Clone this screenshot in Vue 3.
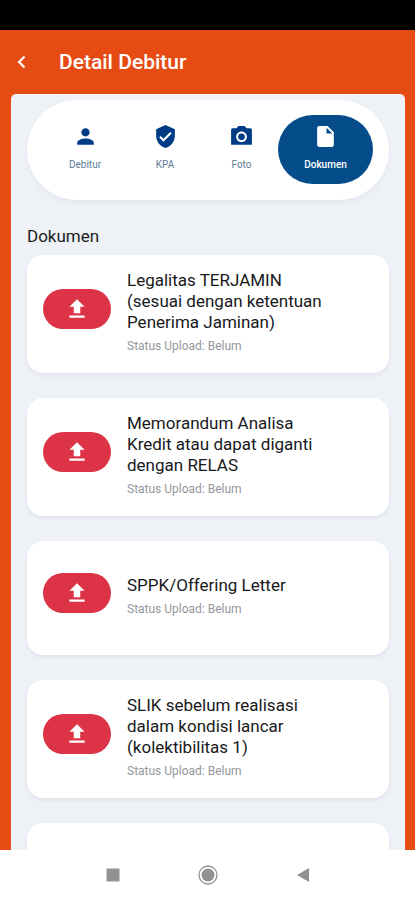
<script setup>
import { ref } from 'vue'

const active = ref('Dokumen')

const tabs = [
  {
    name: 'Debitur',
    icon: 'M12 12c2.21 0 4-1.79 4-4s-1.79-4-4-4-4 1.79-4 4 1.79 4 4 4zm0 2c-2.67 0-8 1.34-8 4v2h16v-2c0-2.66-5.33-4-8-4z',
  },
  {
    name: 'KPA',
    icon: 'M12 1 3 5v6c0 5.55 3.84 10.74 9 12 5.16-1.26 9-6.45 9-12V5l-9-4zm-2 16-4-4 1.41-1.41L10 14.17l6.59-6.59L18 9l-8 8z',
  },
  {
    name: 'Foto',
    icon: 'M9 2 7.17 4H3.500C2.700 4 2 4.700 2 5.500V20h20V5.500C22 4.700 21.300 4 20.500 4h-3.670L15 2H9zm3 15.500c-2.900 0-5.200-2.300-5.200-5.200S9.100 7.100 12 7.100s5.200 2.300 5.200 5.200-2.300 5.200-5.200 5.200zM12 9.100a3.200 3.200 0 1 0 0 6.400 3.200 3.200 0 1 0 0-6.400z',
  },
  {
    name: 'Dokumen',
    icon: 'M6 2c-1.1 0-2 .9-2 2v16c0 1.1.9 2 2 2h12c1.1 0 2-.9 2-2V8l-6-6H6zm7 7V3.5L18.500 9H13z',
  },
]

const documents = [
  'Legalitas TERJAMIN (sesuai dengan ketentuan Penerima Jaminan)',
  'Memorandum Analisa Kredit atau dapat diganti dengan RELAS',
  'SPPK/Offering Letter',
  'SLIK sebelum realisasi dalam kondisi lancar (kolektibilitas 1)',
  'Salinan Permohonan Kredit Debitur',
]
</script>

<template>
  <div class="screen">
    <div class="status-bar"></div>
    <header class="app-bar">
      <button class="back" type="button" aria-label="Kembali">
        <svg viewBox="0 0 24 24" width="20" height="20"><path d="M15 5.500 8.500 12 15 18.500" fill="none" stroke="currentColor" stroke-width="2.600" /></svg>
      </button>
      <h1>Detail Debitur</h1>
    </header>

    <main class="panel">
      <nav class="tabs">
        <button
          v-for="tab in tabs"
          :key="tab.name"
          type="button"
          class="tab"
          :class="{ active: tab.name === active }"
          @click="active = tab.name"
        >
          <svg viewBox="0 0 24 24" width="25" height="25"><path :d="tab.icon" fill="currentColor" fill-rule="evenodd" /></svg>
          <span>{{ tab.name }}</span>
        </button>
      </nav>

      <h2>Dokumen</h2>

      <ul class="documents">
        <li v-for="title in documents" :key="title" class="card">
          <button class="upload" type="button" :aria-label="'Upload ' + title">
            <svg viewBox="0 0 24 24" width="26" height="26"><path d="M9 16h6v-6h4l-7-7-7 7h4zM5 18h14v2H5z" fill="currentColor" /></svg>
          </button>
          <div class="info">
            <h3>{{ title }}</h3>
            <p>Status Upload: Belum</p>
          </div>
        </li>
      </ul>
    </main>

    <footer class="system-nav">
      <button type="button" aria-label="Recent"><svg viewBox="0 0 24 24" width="24" height="24"><path d="M5.500 5.500h13v13h-13z" fill="currentColor" /></svg></button>
      <button type="button" aria-label="Home"><svg viewBox="0 0 24 24" width="24" height="24"><circle cx="12" cy="12" r="9" fill="none" stroke="currentColor" stroke-width="1.300" /><circle cx="12" cy="12" r="6.500" fill="currentColor" /></svg></button>
      <button type="button" aria-label="Back"><svg viewBox="0 0 24 24" width="24" height="24"><path d="M18 5v14L6 12z" fill="currentColor" /></svg></button>
    </footer>
  </div>
</template>

<style>
body {
  margin: 0;
}
</style>

<style scoped>
.screen {
  display: flex;
  flex-direction: column;
  height: 100vh;
  overflow: hidden;
  background: #e64b14;
  font-family: Roboto, "Liberation Sans", sans-serif;
}
button {
  display: flex;
  align-items: center;
  justify-content: center;
  padding: 0;
  border: 0;
  background: none;
  font: inherit;
  cursor: pointer;
}
svg {
  display: block;
}
h1, h2, h3, p, ul {
  margin: 0;
  padding: 0;
}
.status-bar {
  flex: none;
  height: 30px;
  background: #000;
}
.app-bar {
  display: flex;
  flex: none;
  align-items: center;
  gap: 27px;
  height: 64px;
  padding: 0 12px;
  color: #fff;
}
.back {
  color: #fff;
}
h1 {
  font-size: 21px;
  font-weight: 500;
  line-height: 26px;
}
.panel {
  flex: 1;
  min-height: 0;
  margin: 0 10px 0 11px;
  padding: 6px 16px 0;
  overflow: hidden;
  border-radius: 5px 5px 0 0;
  background: #eef1f6;
}
.tabs {
  display: grid;
  grid-template-columns: 80fr 80fr 73fr 95fr;
  padding: 15px 16px 16px 18px;
  border-radius: 50px;
  background: #fff;
  box-shadow: 0 2px 4px rgba(40, 60, 90, 0.06);
}
.tab {
  box-sizing: border-box;
  flex-direction: column;
  gap: 10px;
  height: 69px;
  padding-bottom: 4px;
  border-radius: 35px;
  color: #003c86;
}
.tab span {
  color: #5d7b99;
  font-size: 10px;
  line-height: 12px;
}
.tab.active {
  background: #044d8a;
  color: #fff;
}
.tab.active span {
  color: #fff;
  font-weight: 500;
}
h2 {
  margin-top: 25px;
  color: #1b1d20;
  font-size: 17px;
  font-weight: 400;
  line-height: 22px;
}
.documents {
  display: flex;
  flex-direction: column;
  gap: 25px;
  margin-top: 8px;
  list-style: none;
}
.card {
  display: flex;
  box-sizing: border-box;
  align-items: center;
  gap: 16px;
  min-height: 114px;
  padding: 15px 60px 20px 16px;
  border-radius: 16px;
  background: #fff;
  box-shadow: 0 2px 4px rgba(40, 60, 90, 0.07);
}
.upload {
  flex: none;
  width: 68px;
  height: 40px;
  margin-bottom: 5px;
  border-radius: 20px;
  background: #dc3347;
  color: #fff;
}
.info {
  flex: 1;
}
h3 {
  color: #17191b;
  font-size: 17px;
  font-weight: 400;
  line-height: 21px;
}
.info p {
  margin-top: 6px;
  color: #94979b;
  font-size: 12px;
  line-height: 14px;
}
.system-nav {
  display: flex;
  flex: none;
  align-items: center;
  justify-content: center;
  gap: 71px;
  height: 50px;
  background: #fff;
}
.system-nav button {
  color: #929292;
}
</style>
